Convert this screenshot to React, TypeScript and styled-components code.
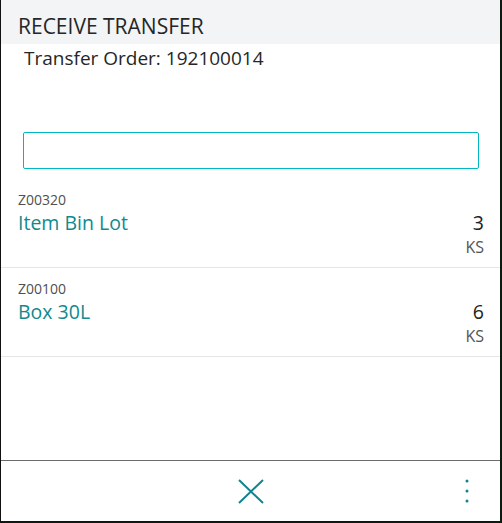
import React from 'react';
import styled, { createGlobalStyle } from 'styled-components';

const GlobalStyle = createGlobalStyle`
  html, body {
    margin: 0;
    padding: 0;
    background: #ffffff;
  }
  * {
    box-sizing: border-box;
  }
`;

const Frame = styled.div`
  width: 502px;
  height: 523px;
  display: flex;
  flex-direction: column;
  border-left: 1px solid #111;
  border-right: 2px solid #0d1a10;
  border-bottom: 2px solid #0d1a10;
  font-family: "Open Sans", "Noto Sans", sans-serif;
  background: #fff;
`;

const Header = styled.div`
  height: 44px;
  flex: none;
  display: flex;
  align-items: center;
  padding-left: 17px;
  padding-top: 7px;
  background: #f3f4f6;
  color: #262626;
  font-size: 21px;
`;

const SubTitle = styled.div`
  padding: 3px 0 0 23px;
  font-size: 19px;
  line-height: 22px;
  color: #262626;
  height: 88px;
`;

const SearchWrap = styled.div`
  padding: 0 21px 0 22px;
`;

const SearchInput = styled.input`
  display: block;
  width: 100%;
  height: 37px;
  border: 1.5px solid #00b7c3;
  border-radius: 2px;
  outline: none;
  font: inherit;
`;

const List = styled.div`
  flex: 1;
  margin-top: 10px;
`;

const Row = styled.div`
  display: flex;
  justify-content: space-between;
  padding: 10px 16px 8px 17px;
  border-bottom: 1px solid #e6e6e6;
`;

const Left = styled.div`
  display: flex;
  flex-direction: column;
`;

const Right = styled.div`
  display: flex;
  flex-direction: column;
  align-items: flex-end;
  padding-top: 21px;
`;

const Code = styled.div`
  font-size: 14px;
  color: #505050;
  line-height: 21px;
`;

const Name = styled.div`
  font-size: 19.5px;
  color: #0f8a8f;
  line-height: 26px;
`;

const Qty = styled.div`
  font-size: 19.5px;
  color: #222;
  line-height: 26px;
`;

const Unit = styled.div`
  font-size: 16px;
  color: #555;
  line-height: 23px;
`;

const Footer = styled.div`
  height: 61px;
  flex: none;
  border-top: 1px solid #6b6b6b;
  display: grid;
  grid-template-columns: 1fr 60px 1fr;
  align-items: center;
`;

const IconButton = styled.button<{ $align?: string }>`
  border: none;
  background: none;
  padding: 0;
  display: flex;
  justify-content: ${p => p.$align || 'center'};
  align-items: center;
  color: #11838f;
  cursor: pointer;
`;

const items = [
  { code: 'Z00320', name: 'Item Bin Lot', qty: 3, unit: 'KS' },
  { code: 'Z00100', name: 'Box 30L', qty: 6, unit: 'KS' },
];

export default function App() {
  return (
    <>
      <GlobalStyle />
      <Frame>
        <Header>RECEIVE TRANSFER</Header>
        <SubTitle>Transfer Order: 192100014</SubTitle>
        <SearchWrap>
          <SearchInput type="text" />
        </SearchWrap>
        <List>
          {items.map(item => (
            <Row key={item.code}>
              <Left>
                <Code>{item.code}</Code>
                <Name>{item.name}</Name>
              </Left>
              <Right>
                <Qty>{item.qty}</Qty>
                <Unit>{item.unit}</Unit>
              </Right>
            </Row>
          ))}
        </List>
        <Footer>
          <span />
          <IconButton aria-label="Close">
            <svg width="26" height="25" viewBox="0 0 26 25">
              <path d="M1 1 L25 24 M25 1 L1 24" stroke="currentColor" strokeWidth="2" fill="none" />
            </svg>
          </IconButton>
          <IconButton $align="flex-end" aria-label="More" style={{ paddingRight: 31 }}>
            <svg width="4" height="24" viewBox="0 0 4 24">
              <circle cx="2" cy="2" r="1.5" fill="currentColor" />
              <circle cx="2" cy="12" r="1.5" fill="currentColor" />
              <circle cx="2" cy="22" r="1.5" fill="currentColor" />
            </svg>
          </IconButton>
        </Footer>
      </Frame>
    </>
  );
}
